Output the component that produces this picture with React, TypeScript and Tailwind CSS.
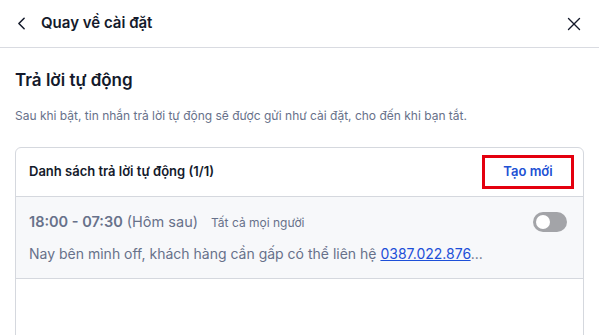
import React from 'react';
import { ChevronLeft, X } from 'lucide-react';

export default function App() {
  return (
    <div
      className="h-[335px] w-[599px] overflow-hidden bg-white text-[#141a2b]"
      style={{ fontFamily: 'Inter, "Noto Sans", sans-serif' }}
    >
      <div className="flex h-[48px] items-center justify-between border-b border-[#d9dbe1] pl-[11px] pr-[14px]">
        <div className="flex items-center">
          <ChevronLeft className="h-[21px] w-[21px]" strokeWidth={1.75} />
          <span className="ml-[9px] text-[15px] font-semibold">Quay về cài đặt</span>
        </div>
        <X className="h-[22px] w-[22px]" strokeWidth={1.5} />
      </div>

      <div className="px-[15px]">
        <h1 className="mt-[20px] text-[17px] font-semibold leading-[24px]">Trả lời tự động</h1>
        <p className="mt-[15px] text-[12px] leading-[18px] text-[#67718a]">
          Sau khi bật, tin nhắn trả lời tự động sẽ được gửi như cài đặt, cho đến khi bạn tắt.
        </p>

        <div className="mt-[22px] h-[300px] rounded-t-md border border-[#d5d8de]">
          <div className="flex h-[49px] items-center justify-between border-b border-[#d5d8de] pl-[13px] pr-[9px]">
            <span className="text-[13px] font-semibold">Danh sách trả lời tự động (1/1)</span>
            <button className="flex h-[34px] w-[92px] items-center justify-center border-[3px] border-[#e4000f] text-[13px] font-semibold text-[#2151d4]">
              Tạo mới
            </button>
          </div>
          <div className="border-b border-[#d5d8de] bg-[#f7f8fa] pb-[14px] pl-[13px] pr-[16px] pt-[14px]">
            <div className="flex items-center justify-between">
              <div className="flex items-baseline text-[#67718a]">
                <span className="text-[14.5px] font-semibold">18:00 - 07:30</span>
                <span className="ml-[4px] text-[14.5px]">(Hôm sau)</span>
                <span className="ml-[13px] text-[12px]">Tất cả mọi người</span>
              </div>
              <div className="flex h-[20px] w-[34px] items-center rounded-full bg-[#a3a4a8] px-[3px]">
                <div className="h-[14px] w-[14px] rounded-full bg-white" />
              </div>
            </div>
            <div className="mt-[11px] text-[14px] leading-[20px] text-[#67718a]">
              Nay bên mình off, khách hàng cần gấp có thể liên hệ{' '}
              <span className="text-[#1d4fd8] underline">0387.022.876</span>...
            </div>
          </div>
        </div>
      </div>
    </div>
  );
}
